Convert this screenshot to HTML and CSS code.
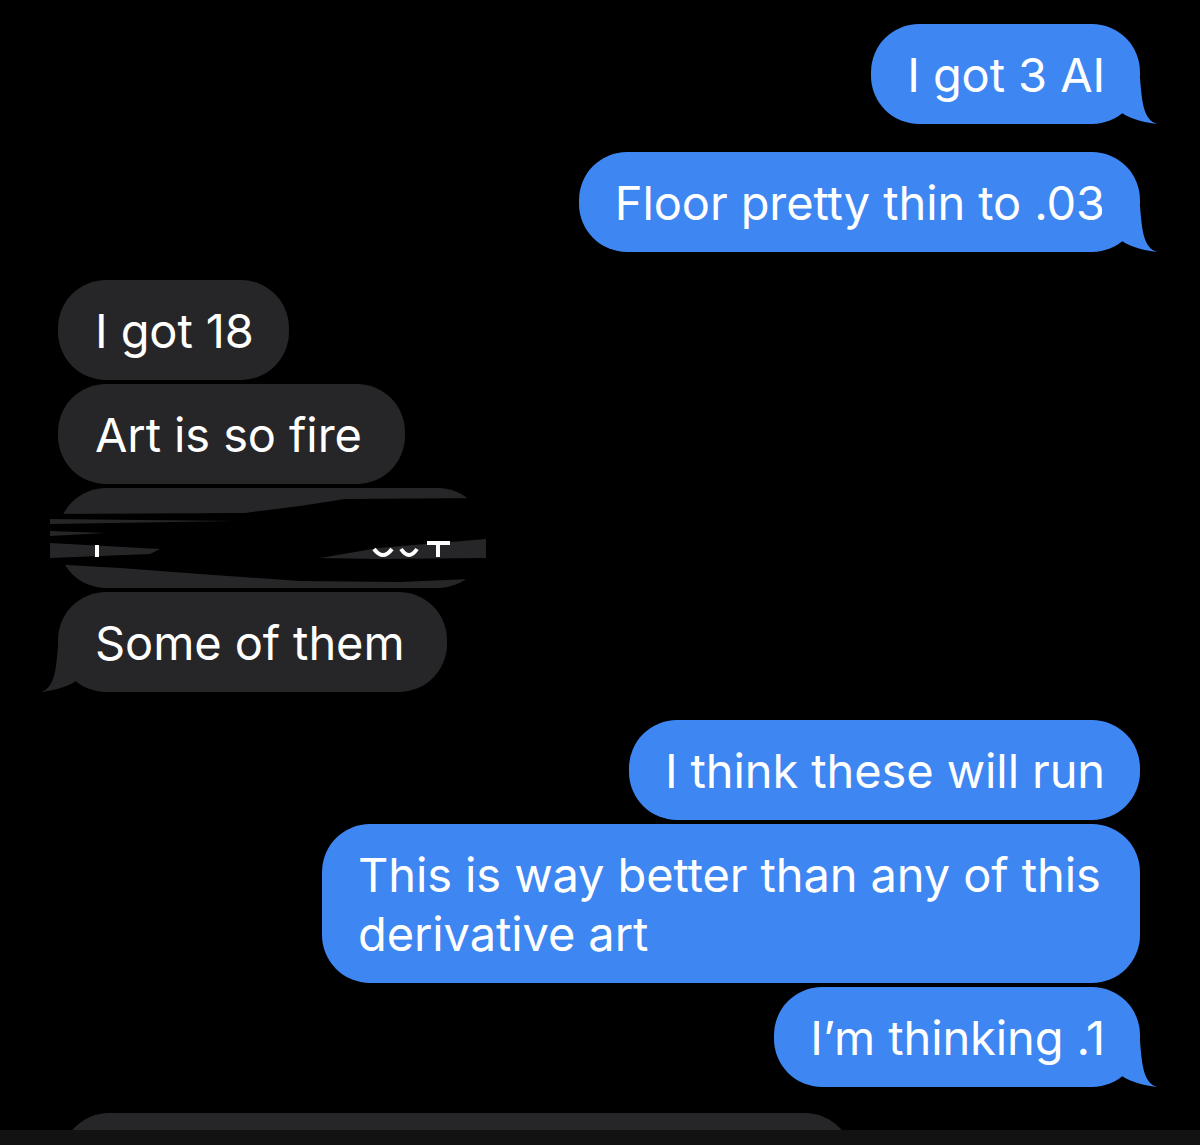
FILE: index.html
```html
<!DOCTYPE html>
<html lang="en">
<head>
    <meta charset="UTF-8">
    <meta name="viewport" content="width=device-width, initial-scale=1.0">
    <title>Messages</title>
    <link rel="stylesheet" href="styles.css">
</head>
<body>
    <div class="thread">
        <div class="group sent">
            <div class="bubble has-tail">I got 3 AI
                <svg class="tail" viewBox="-40 -46 60 46"><path d="M-38 -46 L0 -46 C2 -20 4 -4 17 0 C8 -1 -8 -4 -18 -11 L-38 -11 Z"/></svg>
            </div>
        </div>

        <div class="group sent">
            <div class="bubble has-tail">Floor pretty thin to .03
                <svg class="tail" viewBox="-40 -46 60 46"><path d="M-38 -46 L0 -46 C2 -20 4 -4 17 0 C8 -1 -8 -4 -18 -11 L-38 -11 Z"/></svg>
            </div>
        </div>

        <div class="group received">
            <div class="bubble">I got 18</div>
            <div class="bubble trailing">Art is so fire</div>
            <div class="bubble redacted">&nbsp;
                <!-- scribbled over in the screenshot -->
                <svg class="scribble" viewBox="-8 -10 440 106">
                    <polygon class="ink" points="-8,26 187,25 242,18 287,11 432,10 432,88 412,91 342,94 242,93 142,86 62,80 -8,76"/>
                    <polygon class="gap" points="-8,31 177,33 -8,36"/>
                    <polygon class="gap" points="-8,43 47,45 -8,48"/>
                    <polygon class="gap" points="-8,55 102,61 92,66 -8,70"/>
                    <polygon class="gap" points="262,70 320,60 428,51 428,70 320,71"/>
                    <rect class="mark" x="37" y="57" width="4" height="12"/>
                    <path class="stroke" d="M316 61 Q325 73 334 61"/>
                    <path class="stroke" d="M343 61 Q351 73 359 61"/>
                    <rect class="mark" x="369" y="53" width="23" height="4"/>
                    <rect class="mark" x="378" y="57" width="4" height="12"/>
                </svg>
            </div>
            <div class="bubble trailing has-tail">Some of them
                <svg class="tail" viewBox="-40 -46 60 46"><path d="M-38 -46 L0 -46 C2 -20 4 -4 17 0 C8 -1 -8 -4 -18 -11 L-38 -11 Z"/></svg>
            </div>
        </div>

        <div class="group sent">
            <div class="bubble">I think these will run</div>
            <div class="bubble wide">This is way better than any of this<br>derivative art</div>
            <div class="bubble has-tail">I’m thinking .1
                <svg class="tail" viewBox="-40 -46 60 46"><path d="M-38 -46 L0 -46 C2 -20 4 -4 17 0 C8 -1 -8 -4 -18 -11 L-38 -11 Z"/></svg>
            </div>
        </div>

        <div class="group received peek">
            <div class="peek-clip">
                <div class="bubble peek-bubble"></div>
            </div>
        </div>
    </div>

    <div class="composer"></div>
</body>
</html>
```

FILE: styles.css
```css
body {
    margin: 0;
    background-color: #000;
    font-family: "Inter", "Liberation Sans", sans-serif;
    color: #fff;
    overflow: hidden;
}
.thread {
    display: flex;
    flex-direction: column;
    gap: 28px;
    padding: 24px 60px 0 58px;
}
.group {
    display: flex;
    flex-direction: column;
    gap: 4px;
}
.group.sent {
    align-items: flex-end;
}
.group.received {
    align-items: flex-start;
}
.bubble {
    position: relative;
    box-sizing: border-box;
    padding: 21px 35px 20px 36px;
    border-radius: 48px;
    font-size: 47px;
    line-height: 59px;
    letter-spacing: -0.1px;
    white-space: nowrap;
}
.sent .bubble {
    background-color: #3e86f2;
}
.received .bubble {
    background-color: #262628;
    padding-left: 37px;
}
.received .bubble.trailing {
    padding-right: 43px;
}
.bubble.wide {
    width: 818px;
}
.tail {
    position: absolute;
    bottom: 0;
    width: 60px;
    height: 46px;
}
.sent .tail {
    right: -20px;
    fill: #3e86f2;
}
.received .tail {
    left: -20px;
    transform: scaleX(-1);
    fill: #262628;
}
.redacted {
    width: 428px;
}
.scribble {
    position: absolute;
    left: -8px;
    top: -10px;
    width: 440px;
    height: 106px;
}
.scribble .ink {
    fill: #000;
}
.scribble .gap {
    fill: #262628;
}
.scribble .mark {
    fill: #fff;
}
.scribble .stroke {
    fill: none;
    stroke: #fff;
    stroke-width: 4;
}
.peek {
    margin-top: -2px;
}
.peek-clip {
    height: 17px;
    overflow: hidden;
    margin-left: 3px;
}
.peek-bubble {
    width: 792px;
    height: 100px;
}
.composer {
    height: 40px;
    background-color: #121212;
}
```
